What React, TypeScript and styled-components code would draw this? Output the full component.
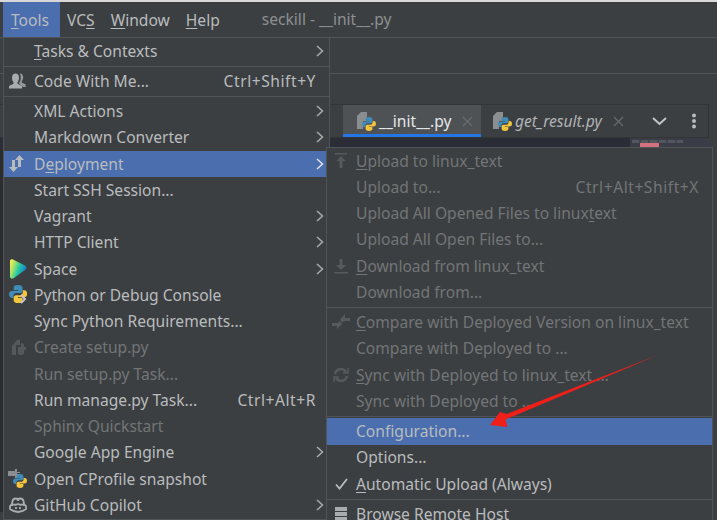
import * as React from "react";
import styled, { createGlobalStyle } from "styled-components";

const GlobalStyle = createGlobalStyle`
  html, body { margin: 0; padding: 0; background: #3c3f41; }
`;

const Frame = styled.div`
  position: relative;
  width: 717px;
  height: 520px;
  overflow: hidden;
  background: #3c3f41;
  font-family: "Noto Sans", "Open Sans", sans-serif;
  font-size: 15.6px;
  color: #b9bcbe;
  border-top: 2px solid #d8d8d8;
  box-sizing: border-box;
`;

const MenuBar = styled.div`
  display: flex;
  align-items: stretch;
  height: 35px;
  padding-left: 3px;
  border-bottom: 1px solid #515456;
`;

const MenuTitle = styled.div<{ $active?: boolean }>`
  display: flex;
  align-items: center;
  padding: 0 ${(p) => (p.$active ? "8px" : "0")};
  margin-right: ${(p) => (p.$active ? "7px" : "16px")};
  width: ${(p) => (p.$active ? "57px" : "auto")};
  box-sizing: border-box;
  background: ${(p) => (p.$active ? "#4b6eaf" : "transparent")};
  color: #b9bcbe;
`;

const WindowTitle = styled.div`
  display: flex;
  align-items: center;
  margin-left: 26px;
  padding-bottom: 2px;
  color: #8c8f91;
`;

const ToolRow = styled.div`
  height: 35px;
  border-bottom: 1px solid #515456;
`;

const SpacerRow = styled.div`
  height: 30px;
`;

const TabBar = styled.div`
  display: flex;
  height: 32px;
  margin-right: 8px;
  padding-left: 343px;
  border-top: 1px solid #333537;
  border-right: 1px solid #2f3133;
  border-bottom: 1px solid #333537;
`;

const Tab = styled.div<{ $active?: boolean }>`
  display: flex;
  flex: none;
  align-items: center;
  box-sizing: border-box;
  width: ${(p) => (p.$active ? "138px" : "159px")};
  padding-top: 3px;
  padding-left: ${(p) => (p.$active ? "13px" : "11px")};
  gap: 3px;
  color: ${(p) => (p.$active ? "#e4e6e8" : "#b0b3b5")};
  font-style: ${(p) => (p.$active ? "normal" : "italic")};
  background: ${(p) => (p.$active ? "#4e5254" : "transparent")};
  border-bottom: 3px solid ${(p) => (p.$active ? "#2675e6" : "transparent")};

  svg {
    flex: none;
  }
`;

const TabClose = styled.span`
  margin-left: 8px;
  color: #666a6c;
  display: flex;
`;

const TabActions = styled.div`
  display: flex;
  align-items: center;
  gap: 24px;
  padding-left: 12px;
`;

const EditorStrip = styled.div`
  display: flex;
  justify-content: flex-end;
  height: 11px;
  margin-right: 9px;
  background: #2b2d36;
`;

const Minimap = styled.div`
  position: relative;
  width: 78px;
  background: #3a3c47;
`;

const MinimapLines = styled.div`
  height: 3px;
  margin: 2px 25px 0 2px;
  background: repeating-linear-gradient(90deg, #55575f 0 7px, #44464f 7px 9px);
`;

const MinimapMark = styled.div`
  position: absolute;
  left: 10px;
  top: 5px;
  width: 19px;
  height: 6px;
  background: #d5707e;
`;

const LeftEdge = styled.div`
  height: 363px;
  width: 3px;
  background: #2b2d30;
`;

const Popup = styled.div<{ $left: number; $top: number; $width: number }>`
  position: absolute;
  left: ${(p) => p.$left}px;
  top: ${(p) => p.$top}px;
  width: ${(p) => p.$width}px;
  box-sizing: border-box;
  background: #3c3f41;
  border: 1px solid #515456;
`;

const Row = styled.div<{ $selected?: boolean; $disabled?: boolean; $inset: number }>`
  display: flex;
  align-items: center;
  box-sizing: border-box;
  height: 26.27px;
  padding-left: ${(p) => p.$inset}px;
  padding-bottom: 1px;
  white-space: nowrap;
  background: ${(p) => (p.$selected ? "#4b6eaf" : "transparent")};
  color: ${(p) => (p.$disabled ? "#727577" : "#b9bcbe")};
`;

const RowIcon = styled.span`
  position: absolute;
  left: 4px;
  width: 20px;
  height: 20px;
  display: flex;
  align-items: center;
  justify-content: center;
`;

const Label = styled.span`
  flex: 1;
`;

const Shortcut = styled.span`
  margin-right: 13px;
  letter-spacing: 0.55px;
`;

const Chevron = styled.span<{ $selected?: boolean }>`
  display: flex;
  margin-right: 5px;
  color: ${(p) => (p.$selected ? "#e2e4e6" : "#a9acae")};
`;

const Separator = styled.div`
  height: 1px;
  margin: 1.465px 0;
  background: #515456;
`;

const U = styled.span`
  text-decoration: underline;
  text-underline-offset: 2px;
  text-decoration-thickness: 1px;
`;

const Annotation = styled.svg`
  position: absolute;
  left: 0;
  top: -2px;
  pointer-events: none;
`;

const ChevronIcon = () => (
  <svg width="8" height="12" viewBox="0 0 8 12" fill="none" stroke="currentColor" strokeWidth="1.5">
    <path d="M1 1l5.5 5L1 11" />
  </svg>
);

const CloseIcon = () => (
  <svg width="11" height="11" viewBox="0 0 11 11" fill="none" stroke="currentColor" strokeWidth="1.3">
    <path d="M1 1l9 9M10 1l-9 9" />
  </svg>
);

const PythonLogo = ({ size = 14 }: { size?: number }) => (
  <svg width={size} height={size} viewBox="0 0 14 14">
    <path d="M7 0C4.4 0 3.6 1 3.6 2.2V4h3.6v.6H2.2C.9 4.6 0 5.6 0 7.2s.9 2.8 2.2 2.8h1.2V8.4c0-1.2 1-2.2 2.2-2.2h3c1 0 1.8-.8 1.8-1.8V2.2C10.4.9 9.3 0 7 0z" fill="#3f8cb8" />
    <path d="M7 14c2.6 0 3.4-1 3.4-2.2V10H6.8v-.6h5C13.1 9.4 14 8.400 14 6.800S13.100 4 11.800 4h-1.200v1.600c0 1.200-1 2.200-2.200 2.200h-3c-1 0-1.800.8-1.800 1.800v2.200C3.600 13.100 4.700 14 7 14z" fill="#f2c53d" />
  </svg>
);

const FilePython = () => (
  <svg width="20" height="20" viewBox="0 0 20 20">
    <path d="M1 5l4-4h6v9H7v8H1z" fill="#8b8e90" />
    <g transform="translate(6 6)">
      <PythonLogo />
    </g>
  </svg>
);

const UsersIcon = () => (
  <svg width="18" height="16" viewBox="0 0 18 16" fill="#a9acae">
    <path d="M0 15.500v-2.500l4.500-2.200V9.200C3.500 8 3 6.500 3 4.500 3 2 4.500.5 6.500.5S10 2 10 4.500c0 2-.5 3.500-1.500 4.700v1.600l4.500 2.200v2.500z" />
    <path d="M11 .5c2 0 3.200 1.500 3.200 3.600 0 1.700-.5 3-1.400 4l-.1 1.400 4 2V14h-2.500l-3-2.200-1-.7V9.600c1-1.200 1.500-3 1.500-5.100 0-1.500-.3-3-1-4z" opacity=".8" />
  </svg>
);

const DeployIcon = () => (
  <svg width="18" height="17" viewBox="0 0 18 17" fill="#b9bcbe">
    <path d="M3 5h3v7h3l-4.500 5L0 12h3zM12 12H9V5H6l0 0L10.500 0 15 5h-3z" />
  </svg>
);

const SpaceIcon = () => (
  <svg width="18" height="20" viewBox="0 0 18 20">
    <defs>
      <linearGradient id="space" x1="0" y1="0.2" x2="1" y2="0.6">
        <stop offset="0" stopColor="#f7ee55" />
        <stop offset="0.25" stopColor="#a6e36a" />
        <stop offset="0.55" stopColor="#26c9a4" />
        <stop offset="1" stopColor="#1276d4" />
      </linearGradient>
    </defs>
    <path d="M1 2C1 .5 2.500 0 4 .5l11 5.500c3 1.500 3 3.500 1 5L5 19c-2 1.300-4 .5-4-1.500z" fill="url(#space)" />
  </svg>
);

const PythonConsoleIcon = () => (
  <svg width="18" height="19" viewBox="0 0 18 19">
    <g transform="scale(1.3)">
      <PythonLogo />
    </g>
    <path d="M12 10l4 4-4 4" fill="none" stroke="#c6c8ca" strokeWidth="2" />
  </svg>
);

const DimFileIcon = () => (
  <svg width="18" height="18" viewBox="0 0 18 18" fill="#56595b">
    <path d="M3 8l5-6h3v5H7v10H3z" />
    <path d="M12 5c2 0 3 1 3 2v2h2v3h-2v3c0 1-1 2-3 2s-3-1-3-2V9h3z" />
  </svg>
);

const ProfileIcon = () => (
  <svg width="20" height="20" viewBox="0 0 20 20">
    <path d="M0 2h7V0h2v3h3v1H9v1h3v1H9v3H7V7H0z" fill="#8b8e90" />
    <g transform="translate(5 5)">
      <PythonLogo />
    </g>
  </svg>
);

const CopilotIcon = () => (
  <svg width="18" height="16" viewBox="0 0 18 16" fill="none" stroke="#a9acae" strokeWidth="1.8">
    <path d="M3 9c0-2 0-3 .5-5C4 2 5.5 1.500 7 1.500S9 2.500 9 4c0-1.500.5-2.500 2-2.500s3 .5 3.500 2.500c.5 2 .5 3 .5 5" />
    <path d="M1 9v3c2.500 2 5 3 8 3s5.500-1 8-3V9l-2-2c-2 1-4 1-6 0-2 1-4 1-6 0z" />
    <path d="M7 10v2M11 10v2" />
  </svg>
);

const UploadIcon = () => (
  <svg width="14" height="16" viewBox="0 0 14 16" fill="#565a5c">
    <path d="M1 0h12v1.500H1zM7 3l4.500 5H8.500v7h-3V8H2.500z" />
  </svg>
);

const DownloadIcon = () => (
  <svg width="16" height="16" viewBox="0 0 16 16" fill="#565a5c">
    <path d="M1 14h14v1.500H1zM6.500 1h3v6H13l-5 5-5-5h3.500z" />
  </svg>
);

const CompareIcon = () => (
  <svg width="18" height="18" viewBox="0 0 18 18" fill="#565a5c">
    <path d="M6 10h-6v3h5v3l5-5-2-3z" />
    <path d="M12 8h6V5h-5V1L8 6.500l2 3z" />
  </svg>
);

const SyncIcon = () => (
  <svg width="16" height="16" viewBox="0 0 16 16" fill="none" stroke="#565a5c" strokeWidth="2.400">
    <path d="M2 7a6 6 0 0 1 11-2M14 9a6 6 0 0 1-11 2" />
    <path d="M10 6h5V1M6 10H1v5" strokeWidth="1.600" />
  </svg>
);

const CheckIcon = () => (
  <svg width="13" height="12" viewBox="0 0 13 12" fill="none" stroke="#b9bcbe" strokeWidth="1.800">
    <path d="M1 6.500L4.500 10.500 12 1" />
  </svg>
);

const ServerIcon = () => (
  <svg width="14" height="16" viewBox="0 0 14 16" fill="#a9acae">
    <path d="M1 1h12v4H1zM1 6h12v4H1zM1 11h12v4H1z" />
  </svg>
);

type Item =
  | { sep: true }
  | {
      sep?: false;
      label: React.ReactNode;
      icon?: React.ReactNode;
      shortcut?: string;
      sub?: boolean;
      selected?: boolean;
      disabled?: boolean;
    };

const toolsItems: Item[] = [
  { label: <><U>T</U>asks &amp; Contexts</>, sub: true },
  { sep: true },
  { label: "Code With Me...", icon: <UsersIcon />, shortcut: "Ctrl+Shift+Y" },
  { sep: true },
  { label: "XML Actions", sub: true },
  { label: "Markdown Converter", sub: true },
  { label: <>D<U>e</U>ployment</>, icon: <DeployIcon />, sub: true, selected: true },
  { label: "Start SSH Session..." },
  { label: "Vagrant", sub: true },
  { label: "HTTP Client", sub: true },
  { label: "Space", icon: <SpaceIcon />, sub: true },
  { label: "Python or Debug Console", icon: <PythonConsoleIcon /> },
  { label: "Sync Python Requirements..." },
  { label: "Create setup.py", icon: <DimFileIcon />, disabled: true },
  { label: "Run setup.py Task...", disabled: true },
  { label: "Run manage.py Task...", shortcut: "Ctrl+Alt+R" },
  { label: "Sphinx Quickstart", disabled: true },
  { label: "Google App Engine", sub: true },
  { label: "Open CProfile snapshot", icon: <ProfileIcon /> },
  { label: "GitHub Copilot", icon: <CopilotIcon />, sub: true },
];

const deployItems: Item[] = [
  { label: <><U>U</U>pload to linux_text</>, icon: <UploadIcon />, disabled: true },
  { label: "Upload to...", shortcut: "Ctrl+Alt+Shift+X", disabled: true },
  { label: <>Upload All Opened Files to linux<U>t</U>ext</>, disabled: true },
  { label: "Upload All Open Files to...", disabled: true },
  { label: <><U>D</U>ownload from linux_text</>, icon: <DownloadIcon />, disabled: true },
  { label: "Download from...", disabled: true },
  { sep: true },
  { label: <><U>C</U>ompare with Deployed Version on linux_text</>, icon: <CompareIcon />, disabled: true },
  { label: "Compare with Deployed to ...", disabled: true },
  { label: <><U>S</U>ync with Deployed to linux_text ...</>, icon: <SyncIcon />, disabled: true },
  { label: "Sync with Deployed to ...", disabled: true },
  { sep: true },
  { label: "Configuration...", selected: true },
  { label: "Options..." },
  { label: <><U>A</U>utomatic Upload (Always)</>, icon: <CheckIcon /> },
  { sep: true },
  { label: "Browse Remote Host", icon: <ServerIcon /> },
];

function Menu({ items, inset }: { items: Item[]; inset: number }) {
  return (
    <>
      {items.map((item, i) =>
        item.sep ? (
          <Separator key={i} />
        ) : (
          <Row key={i} $selected={item.selected} $disabled={item.disabled} $inset={inset}>
            {item.icon && <RowIcon>{item.icon}</RowIcon>}
            <Label>{item.label}</Label>
            {item.shortcut && <Shortcut>{item.shortcut}</Shortcut>}
            {item.sub && (
              <Chevron $selected={item.selected}>
                <ChevronIcon />
              </Chevron>
            )}
          </Row>
        )
      )}
    </>
  );
}

export default function App() {
  return (
    <Frame>
      <GlobalStyle />
      <MenuBar>
        <MenuTitle $active>
          <span><U>T</U>ools</span>
        </MenuTitle>
        <MenuTitle>
          <span>VC<U>S</U></span>
        </MenuTitle>
        <MenuTitle>
          <span><U>W</U>indow</span>
        </MenuTitle>
        <MenuTitle>
          <span><U>H</U>elp</span>
        </MenuTitle>
        <WindowTitle>seckill - __init__.py</WindowTitle>
      </MenuBar>
      <ToolRow />
      <SpacerRow />
      <TabBar>
        <Tab $active>
          <FilePython />
          __init__.py
          <TabClose>
            <CloseIcon />
          </TabClose>
        </Tab>
        <Tab>
          <FilePython />
          get_result.py
          <TabClose>
            <CloseIcon />
          </TabClose>
        </Tab>
        <TabActions>
          <svg width="15" height="9" viewBox="0 0 15 9" fill="none" stroke="#c3c5c7" strokeWidth="2">
            <path d="M1 1l6.500 6 6.500-6" />
          </svg>
          <svg width="6" height="16" viewBox="0 0 6 16" fill="#b9bcbe">
            <circle cx="3" cy="2.500" r="2" />
            <circle cx="3" cy="8" r="2" />
            <circle cx="3" cy="13.500" r="2" />
          </svg>
        </TabActions>
      </TabBar>
      <EditorStrip>
        <Minimap>
          <MinimapLines />
          <MinimapMark />
        </Minimap>
      </EditorStrip>
      <LeftEdge />
      <Popup $left={3} $top={35} $width={327}>
        <Menu items={toolsItems} inset={30} />
      </Popup>
      <Popup $left={326} $top={145} $width={387}>
        <Menu items={deployItems} inset={29} />
      </Popup>
      <Annotation width="717" height="520" viewBox="0 0 717 520">
        <path d="M658 355L507 414 500 412 490 425 507.500 427 505.500 419.500z" fill="#f01f1a" />
      </Annotation>
    </Frame>
  );
}
